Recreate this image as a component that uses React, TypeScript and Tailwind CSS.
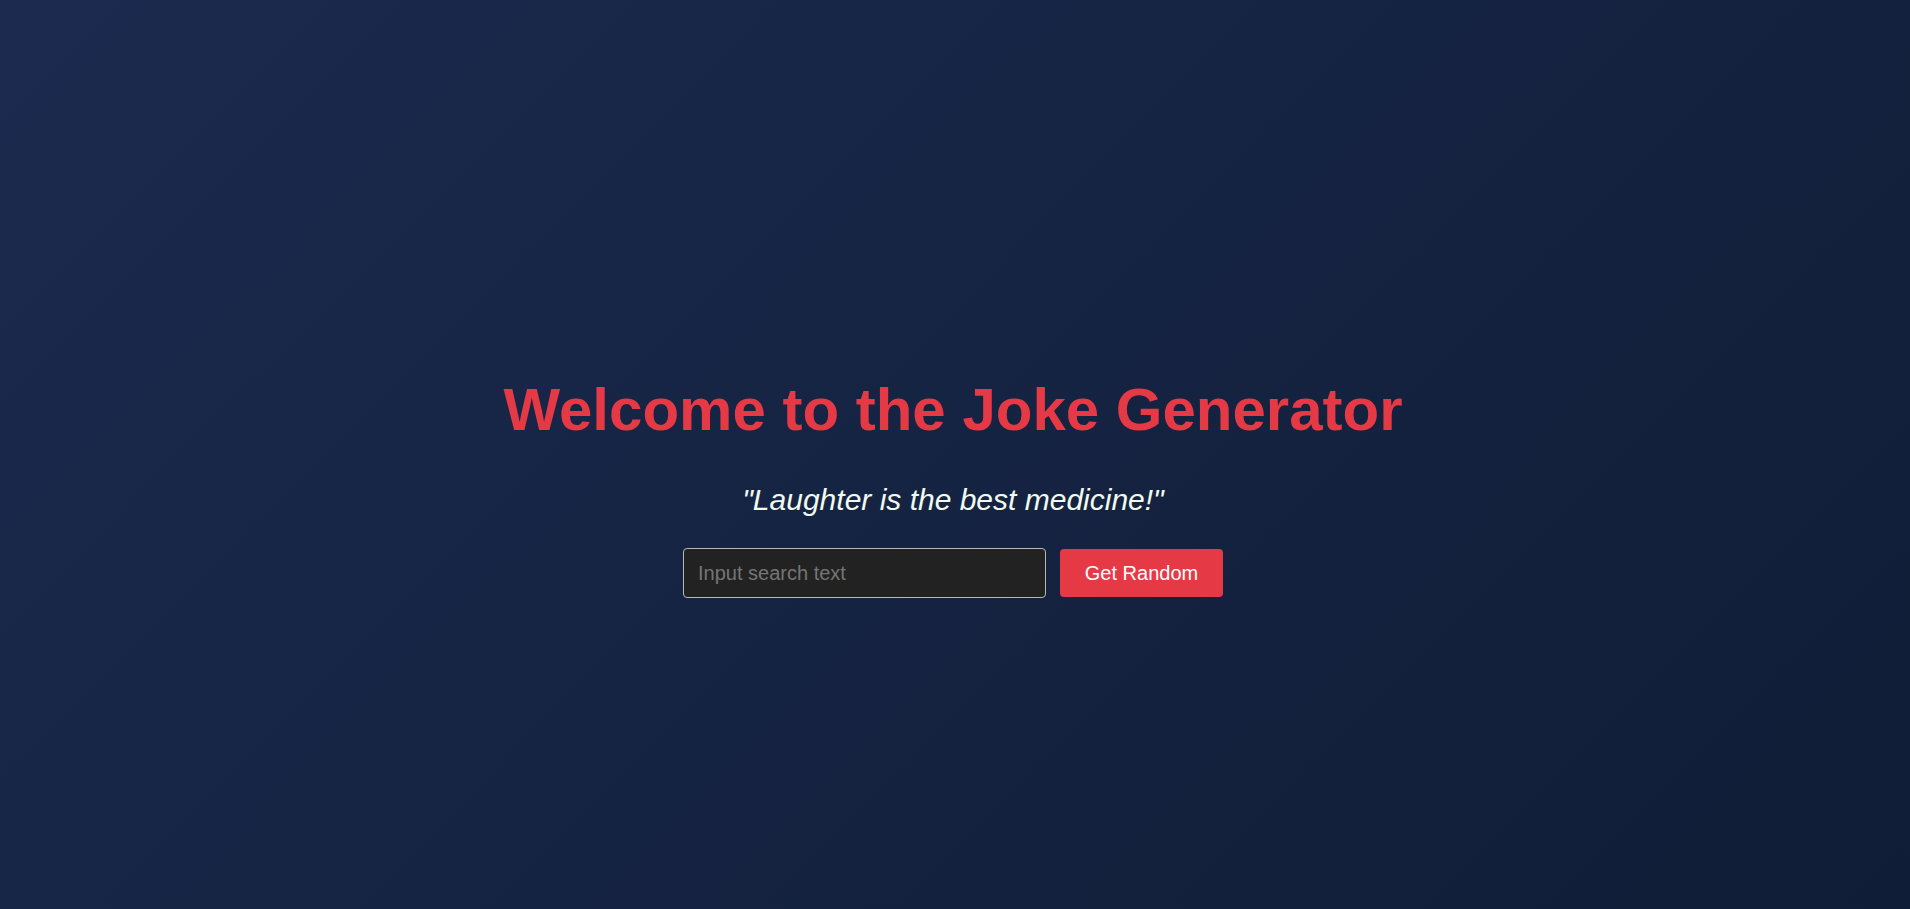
import React from "react";

export default function App() {
  return (
    <div
      className="min-h-screen w-full flex flex-col items-center justify-center pr-[4px] bg-[linear-gradient(135deg,#1b2a4e_0%,#0f1d36_100%)]"
      style={{ fontFamily: '"Liberation Sans", Arial, sans-serif' }}
    >
      <div className="flex flex-col items-center pt-[69px]">
        <h1 className="text-[60px] leading-[60px] font-bold text-[#e63946] m-0">
          Welcome to the Joke Generator
        </h1>
        <p className="mt-[42px] text-[30px] leading-[36px] italic text-[#f1faee]">
          "Laughter is the best medicine!"
        </p>
        <div className="mt-[30px] flex items-center gap-[14px]">
          <input
            type="text"
            placeholder="Input search text"
            className="w-[363px] h-[50px] rounded-[4px] border border-[#b8b8b8] bg-[#222222] px-[14px] text-[20px] text-white placeholder:text-[#757575] outline-none"
            style={{ fontFamily: '"Liberation Sans", Arial, sans-serif' }}
          />
          <button
            className="w-[163px] h-[48px] rounded-[4px] bg-[#e63946] text-white text-[20px]"
            style={{ fontFamily: '"Liberation Sans", Arial, sans-serif' }}
          >
            Get Random
          </button>
        </div>
      </div>
    </div>
  );
}
